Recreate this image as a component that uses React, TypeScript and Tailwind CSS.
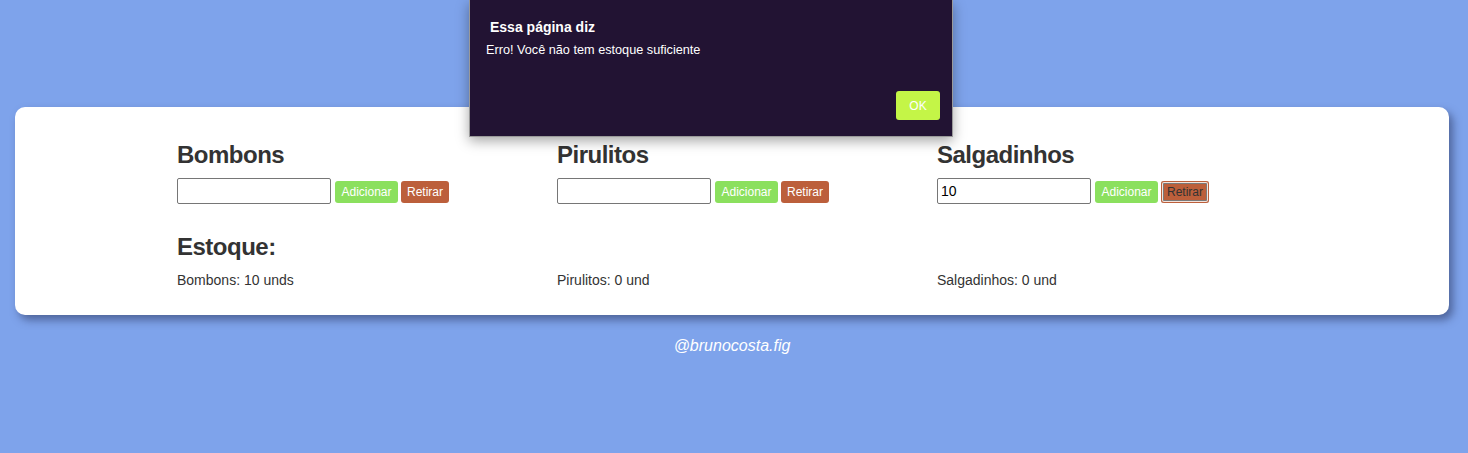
import { FC } from "react";

interface ProductProps {
  name: string;
  value?: string;
  focused?: boolean;
}

const Product: FC<ProductProps> = ({ name, value = "", focused }) => {
  return (
    <div>
      <h3 className="text-[24px] leading-[26px] font-bold tracking-[-0.5px] text-[#333] mb-[10px]">
        {name}
      </h3>
      <div className="flex items-center">
        <input
          readOnly
          value={value}
          className="w-[154px] h-[26px] border border-[#767676] rounded-[2px] px-[3px] text-[14px] text-black bg-white outline-none"
        />
        <button className="ml-[4px] mt-[1px] w-[63px] h-[22px] rounded-[3px] bg-[#8be05e] text-white text-[12px]">
          Adicionar
        </button>
        <button
          className={`ml-[3px] mt-[1px] w-[48px] h-[22px] rounded-[3px] bg-[#bc5f3b] text-[12px] ${
            focused
              ? "text-[#333] shadow-[inset_0_0_0_1px_#bc5f3b,inset_0_0_0_2px_#f3e3dc,inset_0_0_0_3px_#7a7a7a]"
              : "text-white"
          }`}
        >
          Retirar
        </button>
      </div>
    </div>
  );
};

export default function App() {
  return (
    <div
      className="relative min-h-[453px] bg-[#7ea3eb] pt-[107px]"
      style={{ fontFamily: '"Liberation Sans", Arial, sans-serif' }}
    >
      <div className="ml-[15px] mr-[19px] bg-white rounded-[10px] shadow-[4px_5px_8px_rgba(40,50,90,0.55)] pt-[35px] pb-[25px]">
        <div className="ml-[162px]">
          <div className="grid grid-cols-[380px_380px_380px]">
            <Product name="Bombons" />
            <Product name="Pirulitos" />
            <Product name="Salgadinhos" value="10" focused />
          </div>
          <h3 className="mt-[30px] text-[24px] leading-[26px] font-bold tracking-[-0.5px] text-[#333]">
            Estoque:
          </h3>
          <div className="mt-[10px] grid grid-cols-[380px_380px_380px] text-[14px] leading-[20px] text-[#333]">
            <p>Bombons: 10 unds</p>
            <p>Pirulitos: 0 und</p>
            <p>Salgadinhos: 0 und</p>
          </div>
        </div>
      </div>
      <p className="mt-[21px] text-center italic text-white text-[16px] leading-[20px] pr-[4px]">
        @brunocosta.fig
      </p>

      <div className="absolute left-[469px] top-0 w-[484px] h-[137px] bg-[#221333] border border-t-0 border-[#9a9a9a] shadow-[0_4px_12px_rgba(0,0,0,0.35)] text-white">
        <p className="absolute left-[20px] top-[18px] text-[14px] font-bold leading-[18px]">
          Essa página diz
        </p>
        <p className="absolute left-[16px] top-[42px] text-[12.7px] leading-[16px]">
          Erro! Você não tem estoque suficiente
        </p>
        <button className="absolute right-[12px] bottom-[16px] w-[44px] h-[29px] rounded-[3px] bg-[#c4f547] text-white text-[12px]">
          OK
        </button>
      </div>
    </div>
  );
}
